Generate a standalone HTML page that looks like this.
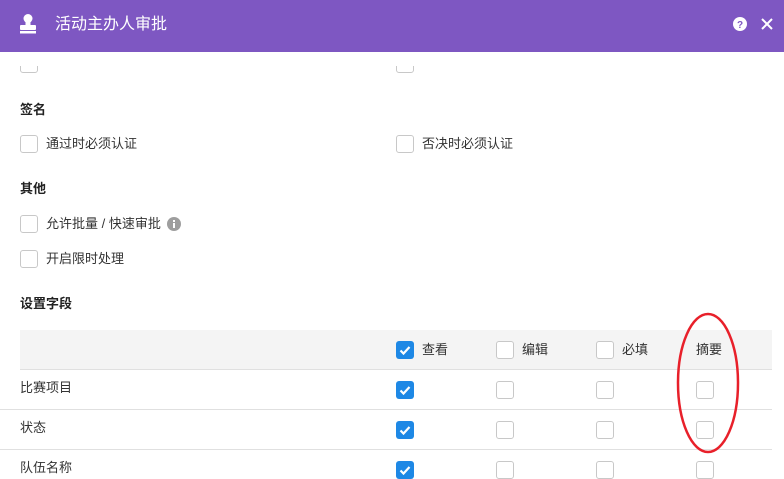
<!DOCTYPE html><html><head><meta charset="utf-8"><style>
body{margin:0;width:784px;height:472px;overflow:hidden;background:#fff;font-family:"Liberation Sans","Noto Sans CJK SC",sans-serif;font-size:13px;color:#333;position:relative}
.a{position:absolute}
.hd{left:0;top:0;width:784px;height:52px;background:#7e57c2}
.cb{position:absolute;width:16px;height:16px;border:1px solid #c8c8c8;border-radius:3px;background:#fff}
.t{position:absolute;line-height:18px;white-space:nowrap}
.b{font-weight:bold;color:#222}
</style></head><body>
<div class="a hd"></div>
<svg class="a" style="left:17px;top:13px" width="22" height="22" viewBox="0 0 22 22"><circle cx="11" cy="5.5" r="4.5" fill="#fff"/><rect x="8.5" y="8" width="5" height="5" fill="#fff"/><rect x="3" y="12" width="16" height="5" rx="1" fill="#fff"/><rect x="3" y="18" width="16" height="2.5" fill="#fff"/></svg>
<div class="t" style="left:55px;top:15px;font-size:16px;color:#fff;line-height:20px">活动主办人审批</div>
<svg class="a" style="left:733px;top:17px" width="14" height="14" viewBox="0 0 14 14"><circle cx="7" cy="7" r="7" fill="#fff"/><text x="7" y="11" font-size="10" font-weight="bold" text-anchor="middle" fill="#7e57c2" font-family="Liberation Sans">?</text></svg>
<svg class="a" style="left:761px;top:18px" width="12" height="12" viewBox="0 0 12 12"><path d="M1 1L11 11M11 1L1 11" stroke="#fff" stroke-width="2"/></svg>
<div class="cb" style="left:20px;top:55px"></div><div class="cb" style="left:396px;top:55px"></div>
<div class="a" style="left:0;top:52px;width:784px;height:14px;background:#fff"></div>
<div class="t b" style="left:20px;top:101px">签名</div>
<div class="cb" style="left:20px;top:135px"></div><div class="t" style="left:46px;top:135px">通过时必须认证</div>
<div class="cb" style="left:396px;top:135px"></div><div class="t" style="left:422px;top:135px">否决时必须认证</div>
<div class="t b" style="left:20px;top:180px">其他</div>
<div class="cb" style="left:20px;top:215px"></div><div class="t" style="left:46px;top:215px">允许批量 / 快速审批</div>
<svg class="a" style="left:167px;top:217px" width="14" height="14" viewBox="0 0 14 14"><circle cx="7" cy="7" r="7" fill="#9e9e9e"/><rect x="6" y="6" width="2" height="5" fill="#fff"/><rect x="6" y="3" width="2" height="2" fill="#fff"/></svg>
<div class="cb" style="left:20px;top:250px"></div><div class="t" style="left:46px;top:250px">开启限时处理</div>
<div class="t b" style="left:20px;top:295px">设置字段</div>
<div class="a" style="left:20px;top:330px;width:752px;height:39px;background:#f4f4f4;border-bottom:1px solid #e0e0e0"></div>
<div class="a" style="left:0;top:409px;width:772px;height:1px;background:#e0e0e0"></div>
<div class="a" style="left:0;top:449px;width:772px;height:1px;background:#e0e0e0"></div>
<div class="t" style="left:422px;top:341px">查看</div><div class="t" style="left:522px;top:341px">编辑</div><div class="t" style="left:622px;top:341px">必填</div><div class="t" style="left:696px;top:341px">摘要</div>
<div class="t" style="left:20px;top:379px">比赛项目</div><div class="t" style="left:20px;top:419px">状态</div><div class="t" style="left:20px;top:459px">队伍名称</div>
<svg width="0" height="0" style="position:absolute"><defs><symbol id="c" viewBox="0 0 18 18"><rect width="18" height="18" rx="3" fill="#1e88e5"/><path d="M4.5 9.5L7.5 12.5L13.5 6" stroke="#fff" stroke-width="2.2" fill="none"/></symbol></defs></svg>
<svg class="a" style="left:396px;top:341px" width="18" height="18"><use href="#c"/></svg>
<svg class="a" style="left:396px;top:381px" width="18" height="18"><use href="#c"/></svg>
<svg class="a" style="left:396px;top:421px" width="18" height="18"><use href="#c"/></svg>
<svg class="a" style="left:396px;top:461px" width="18" height="18"><use href="#c"/></svg>
<div class="cb" style="left:496px;top:341px"></div><div class="cb" style="left:596px;top:341px"></div>
<div class="cb" style="left:496px;top:381px"></div><div class="cb" style="left:596px;top:381px"></div><div class="cb" style="left:696px;top:381px"></div>
<div class="cb" style="left:496px;top:421px"></div><div class="cb" style="left:596px;top:421px"></div><div class="cb" style="left:696px;top:421px"></div>
<div class="cb" style="left:496px;top:461px"></div><div class="cb" style="left:596px;top:461px"></div><div class="cb" style="left:696px;top:461px"></div>
<svg class="a" style="left:0;top:0" width="784" height="472"><ellipse cx="708" cy="383" rx="30" ry="69" fill="none" stroke="#e8202a" stroke-width="2.5"/></svg>
</body></html>
